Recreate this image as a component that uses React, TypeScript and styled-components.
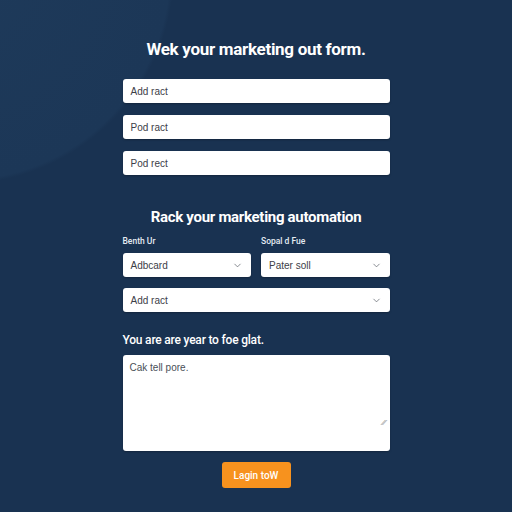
import React from 'react';
import styled, { createGlobalStyle } from 'styled-components';
import { ChevronDown } from 'lucide-react';

const GlobalStyle = createGlobalStyle`
  html, body {
    margin: 0;
    padding: 0;
    width: 512px;
    height: 512px;
    overflow: hidden;
  }
  body {
    font-family: Roboto, "Liberation Sans", sans-serif;
    background: #193251;
  }
`;

const Page = styled.div`
  width: 512px;
  height: 512px;
  box-sizing: border-box;
  background:
    radial-gradient(circle at -40px -30px, #1e3a5a 0, #1c3757 210px, rgba(25, 50, 81, 0) 214px),
    #193251;
  display: flex;
  justify-content: center;
  padding-top: 39px;
`;

const Form = styled.form`
  width: 267px;
  display: flex;
  flex-direction: column;
`;

const Title = styled.h1`
  margin: 0 0 20px;
  color: #ffffff;
  font-size: 17px;
  line-height: 20px;
  font-weight: 700;
  text-align: center;
  letter-spacing: -0.3px;
  white-space: nowrap;
`;

const SubTitle = styled(Title)`
  font-size: 15px;
  margin: 32px 0 9px;
`;

const Stack = styled.div<{ $gap: number }>`
  display: flex;
  flex-direction: column;
  gap: ${p => p.$gap}px;
`;

const Field = styled.div`
  height: 24px;
  box-sizing: border-box;
  background: #ffffff;
  border-radius: 3px;
  display: flex;
  align-items: center;
  justify-content: space-between;
  padding: 0 8px 0 8px;
  color: #3c4048;
  font-family: "Liberation Sans", Arial, sans-serif;
  font-size: 10px;
  box-shadow: 0 1px 2px rgba(0, 0, 0, 0.25);
`;

const Row = styled.div`
  display: grid;
  grid-template-columns: 1fr 1fr;
  column-gap: 10px;
`;

const Column = styled.div`
  display: flex;
  flex-direction: column;
`;

const SmallLabel = styled.span`
  color: #e4ebf3;
  font-size: 8.5px;
  line-height: 10px;
  font-weight: 500;
  height: 10px;
  margin-bottom: 7px;
`;

const NoteLabel = styled.span`
  color: #ffffff;
  font-size: 12px;
  line-height: 14px;
  font-weight: 500;
  letter-spacing: -0.2px;
  margin: 21px 0 8px;
`;

const TextBox = styled.div`
  position: relative;
  height: 96px;
  box-sizing: border-box;
  background: #ffffff;
  border-radius: 3px;
  padding: 7px 7px;
  color: #4a4f57;
  font-family: "Liberation Sans", Arial, sans-serif;
  font-size: 10px;
  box-shadow: 0 1px 2px rgba(0, 0, 0, 0.25);
`;

const Grip = styled.span`
  position: absolute;
  right: 4px;
  bottom: 24px;
  color: #777;
  font-size: 8px;
  font-style: italic;
`;

const Actions = styled.div`
  display: flex;
  justify-content: center;
  margin-top: 11px;
`;

const Button = styled.button`
  width: 69px;
  height: 26px;
  border: none;
  border-radius: 3px;
  background: #f7921e;
  color: #ffffff;
  font-family: inherit;
  font-size: 10px;
  font-weight: 500;
`;

const Chevron = styled(ChevronDown)`
  color: #555b63;
  flex-shrink: 0;
`;

export default function App() {
  return (
    <Page>
      <GlobalStyle />
      <Form onSubmit={e => e.preventDefault()}>
        <Title>Wek your marketing out form.</Title>
        <Stack $gap={12}>
          <Field>Add ract</Field>
          <Field>Pod ract</Field>
          <Field>Pod rect</Field>
        </Stack>

        <SubTitle>Rack your marketing automation</SubTitle>
        <Stack $gap={11}>
          <Row>
            <Column>
              <SmallLabel>Benth Ur</SmallLabel>
              <Field>Adbcard<Chevron size={11} strokeWidth={1.5} /></Field>
            </Column>
            <Column>
              <SmallLabel>Sopal d Fue</SmallLabel>
              <Field>Pater soll<Chevron size={11} strokeWidth={1.5} /></Field>
            </Column>
          </Row>
          <Field>Add ract<Chevron size={11} strokeWidth={1.5} /></Field>
        </Stack>

        <NoteLabel>You are are year to foe glat.</NoteLabel>
        <TextBox>
          Cak tell pore.
          <Grip>⁄⁄</Grip>
        </TextBox>
        <Actions>
          <Button type="submit">Lagin toW</Button>
        </Actions>
      </Form>
    </Page>
  );
}
